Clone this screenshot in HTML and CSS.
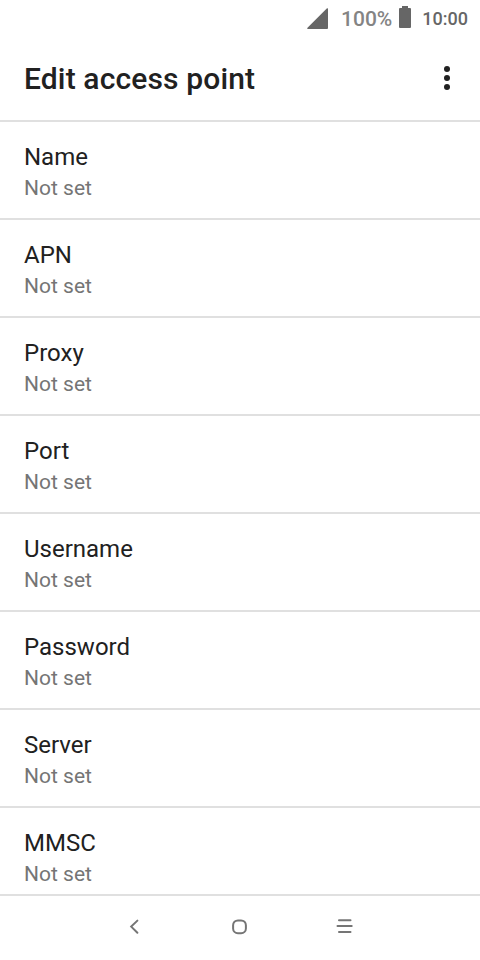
FILE: index.html
```html
<!DOCTYPE html>
<html lang="en">
<head>
<meta charset="utf-8">
<title>Edit access point</title>
<link rel="stylesheet" href="styles.css">
</head>
<body>
<div class="status">
  <svg class="signal" width="21" height="21" viewBox="0 0 21 21"><path d="M20 0.3Q21 0 21 1V20Q21 21 20 21H1Q-0.5 21 0.5 19.8Z"/></svg>
  <span class="percent">100%</span>
  <svg class="battery" width="12" height="22" viewBox="0 0 12 22"><path d="M3 0H9V2H11Q12 2 12 3V21Q12 22 11 22H1Q0 22 0 21V3Q0 2 1 2H3Z"/></svg>
  <span class="clock">10:00</span>
</div>
<header class="bar">
  <h1>Edit access point</h1>
  <svg class="more" width="6" height="24" viewBox="0 0 6 24"><circle cx="3" cy="3" r="3"/><circle cx="3" cy="12" r="3"/><circle cx="3" cy="21" r="3"/></svg>
</header>
<main class="list">
  <div class="row"><div class="title">Name</div><div class="value">Not set</div></div>
  <div class="row"><div class="title">APN</div><div class="value">Not set</div></div>
  <div class="row"><div class="title">Proxy</div><div class="value">Not set</div></div>
  <div class="row"><div class="title">Port</div><div class="value">Not set</div></div>
  <div class="row"><div class="title">Username</div><div class="value">Not set</div></div>
  <div class="row"><div class="title">Password</div><div class="value">Not set</div></div>
  <div class="row"><div class="title">Server</div><div class="value">Not set</div></div>
  <div class="row"><div class="title">MMSC</div><div class="value">Not set</div></div>
</main>
<nav class="nav">
  <svg width="24" height="24" viewBox="0 0 24 24"><path d="M14.4 4.6L8.2 10.6L14.4 16.8"/></svg>
  <svg width="24" height="24" viewBox="0 0 24 24"><rect x="5.1" y="4.4" width="12.8" height="12.8" rx="4.8"/></svg>
  <svg width="24" height="24" viewBox="0 0 24 24"><path d="M6 4.3H17.5M4.5 10H18.7M6 16H17.5"/></svg>
</nav>
</body>
</html>
```
FILE: styles.css
```css
* { box-sizing: border-box; }
body { margin: 0; width: 480px; height: 960px; display: flex; flex-direction: column; overflow: hidden; background: #fff; color: #212121; font-family: Roboto, sans-serif; }
.status { height: 36px; flex: none; display: flex; align-items: center; justify-content: flex-end; padding-right: 12px; color: #666; fill: #666; }
.percent { font-size: 21px; font-weight: 500; color: #848484; margin: 2px 7px 0 13px; line-height: 24px; }
.signal { margin-top: 1px; }
.battery { margin: -2px 11px 0 0; }
.clock { font-size: 18px; font-weight: 500; line-height: 24px; margin-top: 2px; }
.bar { height: 84px; flex: none; display: flex; align-items: center; justify-content: space-between; padding: 0 30px 0 24px; }
.more { fill: #212121; }
h1 { margin: 2px 0 0; font-size: 30px; line-height: 36px; font-weight: 500; letter-spacing: 0.14px; }
.list { flex: 1; min-height: 0; overflow: hidden; }
.row { height: 98px; border-top: 2px solid #e0e0e0; padding: 20px 24px 0; }
.title { font-size: 24px; line-height: 30px; }
.value { font-size: 21px; line-height: 28px; margin-top: 2px; color: #757575; }
.nav { height: 66px; flex: none; border-top: 2px solid #e0e0e0; display: flex; align-items: center; justify-content: center; gap: 81px; fill: none; stroke: #757575; stroke-width: 2; stroke-linecap: round; }
```
